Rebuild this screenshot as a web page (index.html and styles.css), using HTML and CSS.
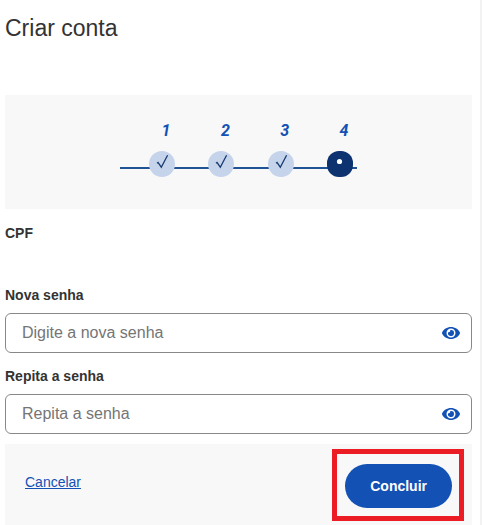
FILE: index.html
```html
<!DOCTYPE html>
<html lang="pt-BR">
<head>
  <meta charset="utf-8">
  <meta name="viewport" content="width=device-width, initial-scale=1">
  <title>Criar conta</title>
  <link rel="stylesheet" href="styles.css">
</head>
<body>
  <main class="page">
    <h1 class="title">Criar conta</h1>

    <div class="wizard">
      <ol class="steps">
        <li class="step">
          <span class="number">1</span>
          <span class="marker"><svg class="check" viewBox="0 0 26 26" aria-hidden="true"><path d="M8 12.200l1-.7 3.300 4.700L18.600 4.300"/></svg></span>
        </li>
        <li class="step">
          <span class="number">2</span>
          <span class="marker"><svg class="check" viewBox="0 0 26 26" aria-hidden="true"><path d="M8 12.200l1-.7 3.300 4.700L18.600 4.300"/></svg></span>
        </li>
        <li class="step">
          <span class="number">3</span>
          <span class="marker"><svg class="check" viewBox="0 0 26 26" aria-hidden="true"><path d="M8 12.200l1-.7 3.300 4.700L18.600 4.300"/></svg></span>
        </li>
        <li class="step" aria-current="step">
          <span class="number">4</span>
          <span class="marker current"><svg class="dot" viewBox="0 0 26 26" aria-hidden="true"><circle cx="12.500" cy="10.500" r="2.600"/></svg></span>
        </li>
      </ol>
    </div>

    <form class="form">
      <p class="label cpf">CPF</p>

      <label class="label" for="senha">Nova senha</label>
      <div class="field">
        <input class="input" id="senha" type="password" placeholder="Digite a nova senha">
        <button class="reveal" type="button" aria-label="Mostrar senha">
          <svg class="eye" viewBox="0 0 18 12" aria-hidden="true"><path fill-rule="evenodd" d="M9 0C4.900 0 1.600 2.300.1 5.500a1 1 0 0 0 0 1C1.600 9.700 4.900 12 9 12s7.400-2.300 8.900-5.500a1 1 0 0 0 0-1C16.400 2.300 13.100 0 9 0zm0 1.500a4.500 4.500 0 1 1 0 9 4.500 4.500 0 0 1 0-9z"/><path d="M9 3a3 3 0 1 1-2.900 2.200A1.600 1.600 0 0 0 8.200 3.100 3 3 0 0 1 9 3z"/></svg>
        </button>
      </div>

      <label class="label" for="repita">Repita a senha</label>
      <div class="field">
        <input class="input" id="repita" type="password" placeholder="Repita a senha">
        <button class="reveal" type="button" aria-label="Mostrar senha repetida">
          <svg class="eye" viewBox="0 0 18 12" aria-hidden="true"><path fill-rule="evenodd" d="M9 0C4.900 0 1.600 2.300.1 5.500a1 1 0 0 0 0 1C1.600 9.700 4.900 12 9 12s7.400-2.300 8.900-5.500a1 1 0 0 0 0-1C16.400 2.300 13.100 0 9 0zm0 1.500a4.500 4.500 0 1 1 0 9 4.500 4.500 0 0 1 0-9z"/><path d="M9 3a3 3 0 1 1-2.900 2.200A1.600 1.600 0 0 0 8.200 3.100 3 3 0 0 1 9 3z"/></svg>
        </button>
      </div>

      <div class="actions">
        <a class="cancel" href="#">Cancelar</a>
        <div class="highlight">
          <button class="submit" type="submit">Concluir</button>
        </div>
      </div>
    </form>
  </main>
</body>
</html>
```
FILE: styles.css
```css
* {
  box-sizing: border-box;
}

body {
  margin: 0;
  background: #fff;
  color: #333;
  font-family: "Liberation Sans", Arial, sans-serif;
  font-size: 14px;
  line-height: 20px;
}

.page {
  min-height: 100vh;
  padding: 12px 8px 0 5px;
  border-right: 2px solid #f2f2f2;
}

.title {
  margin: 0 0 51px;
  font-size: 23px;
  font-weight: 400;
  line-height: 32px;
}

.wizard {
  display: flex;
  justify-content: center;
  padding: 24px 0 32px;
  background: #f8f8f8;
}

.steps {
  display: flex;
  justify-content: space-between;
  width: 237px;
  margin: 0;
  padding: 0 4px 0 29px;
  list-style: none;
  background: linear-gradient(#1f5396, #1f5396) 0 48px / 100% 2px no-repeat;
}

.step {
  display: flex;
  flex-direction: column;
  gap: 8px;
  width: 26px;
}

.number {
  padding-left: 8px;
  color: #1351b4;
  font-family: Roboto, "Liberation Sans", sans-serif;
  font-size: 16px;
  font-style: italic;
  font-weight: 700;
  line-height: 24px;
  text-align: center;
}

.marker {
  height: 26px;
  border-radius: 50%;
  background: #c5d4eb;
}

.current {
  border-radius: 12px;
  background: #0c326f;
}

.check,
.dot {
  display: block;
  width: 26px;
  height: 26px;
}

.check {
  fill: none;
  stroke: #173a70;
  stroke-width: 1.3;
}

.dot {
  fill: #fff;
}

.label {
  display: block;
  margin: 0 0 8px;
  font-weight: 700;
}

.cpf {
  margin: 14px 0 42px;
}

.field {
  display: flex;
  align-items: center;
  height: 40px;
  margin-bottom: 13px;
  padding: 0 8px 0 16px;
  border: 1px solid #888;
  border-radius: 6px;
}

.input {
  flex: 1;
  min-width: 0;
  padding: 0;
  border: 0;
  outline: 0;
  background: none;
  color: #333;
  font: inherit;
  font-size: 16px;
}

.input::placeholder {
  color: #757575;
  opacity: 1;
}

.reveal {
  display: flex;
  align-items: center;
  justify-content: center;
  width: 24px;
  height: 24px;
  padding: 0;
  border: 0;
  background: none;
}

.eye {
  width: 18px;
  height: 12px;
  fill: #1351b4;
}

.actions {
  display: flex;
  align-items: flex-start;
  justify-content: space-between;
  margin-top: -3px;
  padding: 5px 8px 4px 20px;
  background: #f8f8f8;
}

.cancel {
  margin-top: 23px;
  color: #1351b4;
}

.highlight {
  padding: 10px 7px 8px 8px;
  border: 5px solid #ec1c24;
}

.submit {
  height: 44px;
  padding: 0 25px;
  border: 0;
  border-radius: 22px;
  background: #1351b4;
  color: #fff;
  font: inherit;
  font-weight: 700;
}
```
